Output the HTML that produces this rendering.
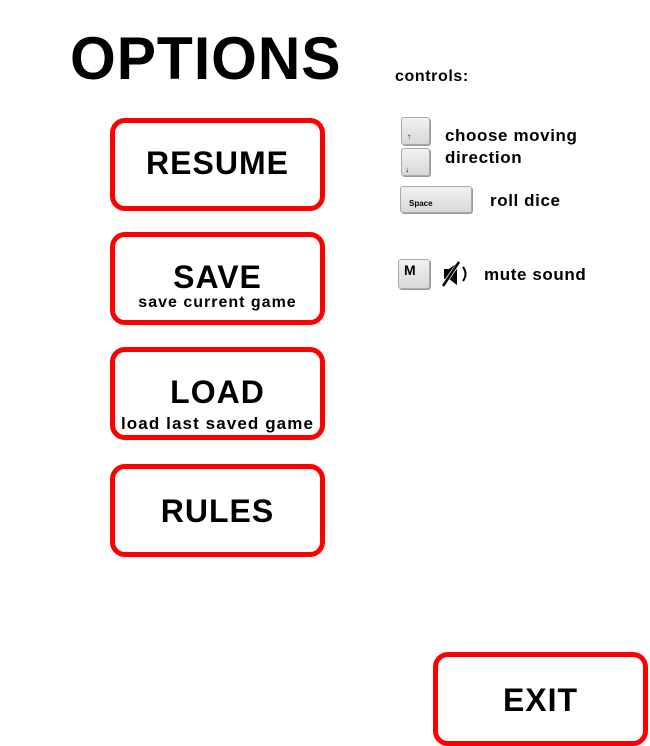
<!DOCTYPE html>
<html><head><meta charset="utf-8">
<style>
html,body{margin:0;padding:0;background:#fff;}
body{width:650px;height:746px;position:relative;overflow:hidden;font-family:"Liberation Sans",sans-serif;color:#000;}
.t{position:absolute;white-space:nowrap;}
.btn{position:absolute;box-sizing:border-box;border:5px solid #f00;border-radius:15px;background:#fff;}
.bt{position:absolute;left:0;right:0;text-align:center;font-weight:bold;font-size:32px;letter-spacing:1px;}
.bs{position:absolute;left:0;right:0;text-align:center;font-weight:bold;font-size:16px;letter-spacing:1px;}
.key{position:absolute;box-sizing:border-box;border:1px solid #aaa;border-radius:3px;background:linear-gradient(#f2f2f2,#d8d8d8);box-shadow:1px 1px 0 #999;}
.lbl{font-weight:bold;font-size:17px;letter-spacing:0.6px;}
</style></head><body>
<div class="t" style="left:70px;top:24px;font-family:'Liberation Sans',sans-serif;font-weight:bold;font-size:60px;letter-spacing:1px;transform:scaleX(0.98);transform-origin:left;">OPTIONS</div>

<div class="btn" style="left:110px;top:118px;width:215px;height:93px;"><div class="bt" style="top:22px;">RESUME</div></div>
<div class="btn" style="left:110px;top:232px;width:215px;height:93px;"><div class="bt" style="top:22px;">SAVE</div><div class="bs" style="top:57px;">save current game</div></div>
<div class="btn" style="left:110px;top:347px;width:215px;height:93px;"><div class="bt" style="top:22px;">LOAD</div><div class="bs" style="top:62px;font-size:17px;letter-spacing:1.1px;">load last saved game</div></div>
<div class="btn" style="left:110px;top:464px;width:215px;height:93px;"><div class="bt" style="top:24px;">RULES</div></div>
<div class="btn" style="left:433px;top:652px;width:215px;height:94px;"><div class="bt" style="top:25px;">EXIT</div></div>

<div class="t lbl" style="left:395px;top:68px;font-size:16px;">controls:</div>
<div class="key" style="left:401px;top:117px;width:29px;height:28px;"><span style="position:absolute;left:5px;top:14px;font-size:8px;">↑</span></div>
<div class="key" style="left:401px;top:148px;width:29px;height:28px;"><span style="position:absolute;left:3px;top:16px;font-size:8px;">↓</span></div>
<div class="t lbl" style="left:445px;top:126px;">choose moving</div>
<div class="t lbl" style="left:445px;top:148px;">direction</div>
<div class="key" style="left:400px;top:186px;width:72px;height:27px;"><span style="position:absolute;left:8px;top:12px;font-size:8px;font-weight:bold;">Space</span></div>
<div class="t lbl" style="left:490px;top:191px;">roll dice</div>
<div class="key" style="left:398px;top:259px;width:32px;height:30px;"><span style="position:absolute;left:5px;top:2px;font-size:14px;font-weight:bold;">M</span></div>
<svg style="position:absolute;left:440px;top:259px;" width="32" height="30" viewBox="0 0 32 30">
<path d="M4 10h5l8-6v22l-8-6H4z" fill="#000"/>
<path d="M2 28L20 2" stroke="#fff" stroke-width="4"/>
<path d="M3 27L19 3" stroke="#000" stroke-width="2.5"/>
<path d="M23 8q5 7 0 14" stroke="#000" stroke-width="2" fill="none"/>
</svg>
<div class="t lbl" style="left:484px;top:265px;">mute sound</div>
</body></html>
